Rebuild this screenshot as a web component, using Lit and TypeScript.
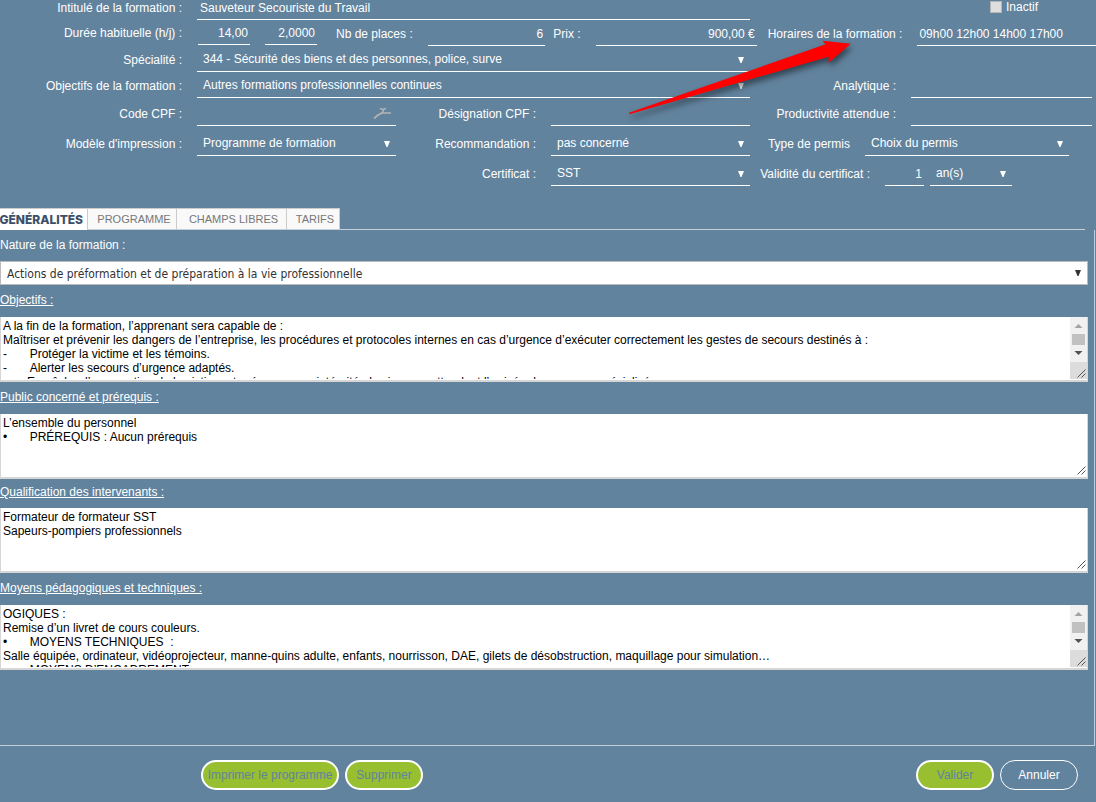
import { LitElement, html, svg, css } from "lit";
import { customElement } from "lit/decorators.js";

const caret = html`<svg class="caret" width="6" height="6" viewBox="0 0 6 6" aria-hidden="true">
  <path d="M0 0H6L3.500 6H2.500Z" fill="currentColor" />
</svg>`;

const hatch = svg`<path d="M0.5 8.5L8.5 0.5M4.5 8.5L8.5 4.5" stroke="#555" stroke-width="1" fill="none" />`;

interface Zone {
  id: string;
  label: string;
  text: string;
  scroll: boolean;
}

const ZONES: Zone[] = [
  {
    id: "objectifs",
    label: "Objectifs :",
    text:
      "A la fin de la formation, l’apprenant sera capable de :\n" +
      "Maîtriser et prévenir les dangers de l’entreprise, les procédures et protocoles internes en cas d’urgence d’exécuter correctement les gestes de secours destinés à :\n" +
      "-\tProtéger la victime et les témoins.\n" +
      "-\tAlerter les secours d’urgence adaptés.\n" +
      "-      Empêcher l’aggravation de la victime et préserver son intégrité physique en attendant l’arrivée des secours spécialisés.",
    scroll: true,
  },
  {
    id: "public",
    label: "Public concerné et prérequis :",
    text: "L’ensemble du personnel\n•\tPRÉREQUIS : Aucun prérequis",
    scroll: false,
  },
  {
    id: "qualification",
    label: "Qualification des intervenants :",
    text: "Formateur de formateur SST\nSapeurs-pompiers professionnels",
    scroll: false,
  },
  {
    id: "moyens",
    label: "Moyens pédagogiques et techniques :",
    text:
      "OGIQUES :\nRemise d’un livret de cours couleurs.\n•\tMOYENS TECHNIQUES  :\n" +
      "Salle équipée, ordinateur, vidéoprojecteur, manne-quins adulte, enfants, nourrisson, DAE, gilets de désobstruction, maquillage pour simulation…\n" +
      "•\tMOYENS D’ENCADREMENT",
    scroll: true,
  },
];

@customElement("app-root")
export class AppRoot extends LitElement {
  static styles = css`
    :host {
      display: block;
      position: relative;
      min-height: 100vh;
      overflow: hidden;
      background: #62839e;
      color: #fff;
      font: 12px/14px "Liberation Sans", Arial, sans-serif;
    }
    * {
      box-sizing: border-box;
    }
    form {
      display: flex;
      flex-direction: column;
      min-height: 100vh;
    }
    input,
    select,
    textarea,
    button {
      font: inherit;
      color: inherit;
      margin: 0;
      border-radius: 0;
    }
    .head {
      display: flex;
      flex-direction: column;
      padding-bottom: 22px;
    }
    .row {
      display: grid;
      grid-template-columns: minmax(0, 396fr) minmax(0, 354fr) minmax(0, 346fr);
      align-items: end;
      height: 26px;
    }
    .row.first {
      height: 20px;
    }
    .row.mid {
      height: 28px;
    }
    .row.tall {
      height: 30px;
    }
    .lead,
    .second,
    .third {
      display: flex;
      align-items: flex-end;
      min-width: 0;
    }
    .wide {
      grid-column: span 2;
    }
    label {
      white-space: nowrap;
      padding-bottom: 5px;
    }
    .lead > label {
      width: 182px;
      margin-right: 15px;
      text-align: right;
      flex: none;
    }
    .second > label {
      width: 140px;
      margin-right: 15px;
      text-align: right;
      flex: none;
    }
    .third > label {
      width: 146px;
      margin-right: 15px;
      text-align: right;
      flex: none;
    }
    .third > .permis {
      width: 100px;
    }
    .third > .validite {
      width: 120px;
    }
    .third {
      padding-right: 4px;
    }
    .third.short {
      padding-right: 27px;
    }
    .line {
      flex: 1 1 0;
      min-width: 0;
      width: 100%;
      height: 20px;
      padding: 0 2px 4px 3px;
      border: 0;
      border-bottom: 1px solid #fff;
      background: none;
      outline: none;
    }
    .num {
      text-align: right;
    }
    .pick {
      display: grid;
      flex: 1 1 0;
      min-width: 0;
      align-items: center;
    }
    .pick > select {
      grid-area: 1 / 1;
      appearance: none;
      width: 100%;
      height: 20px;
      padding: 0 20px 5px 6px;
      border: 0;
      border-bottom: 1px solid #fff;
      background: none;
      outline: none;
    }
    .pick > .caret {
      grid-area: 1 / 1;
      justify-self: end;
      margin-right: 6px;
      margin-bottom: 4px;
      pointer-events: none;
    }
    option {
      color: #333;
    }
    .search {
      display: grid;
      flex: 1 1 0;
      min-width: 0;
    }
    .search > * {
      grid-area: 1 / 1;
    }
    .search > button {
      justify-self: end;
      align-self: start;
      padding: 0;
      margin: 1px 5px 0 0;
      border: 0;
      background: none;
      height: 12px;
      line-height: 0;
    }
    .small {
      flex: none;
      width: 52px;
    }
    .timing {
      grid-column: 1 / -1;
      display: flex;
      align-items: flex-end;
      min-width: 0;
    }
    .timing > label {
      width: 182px;
      margin-right: 16px;
      text-align: right;
      flex: none;
      padding-bottom: 6px;
    }
    .timing > .small {
      margin-right: 15px;
      margin-bottom: 1px;
    }
    .timing > .after {
      width: auto;
      margin: 0 15px 0 8px;
      padding-bottom: 5px;
    }
    .timing > .after.far {
      margin-left: 4px;
    }
    .timing > .after.hours {
      margin-left: 11px;
    }
    .places {
      flex-grow: 116;
    }
    .prix {
      flex-grow: 161;
    }
    .horaires {
      flex-grow: 180;
      padding-left: 2px;
    }
    .inactive {
      align-items: center;
      gap: 4px;
      height: 20px;
      padding-left: 240px;
      padding-bottom: 6px;
    }
    .inactive > input {
      appearance: none;
      width: 12px;
      height: 12px;
      border: 1px solid #b6b6b6;
      background: #dedede;
    }
    .inactive > label {
      width: auto;
      margin: 0;
      padding: 0;
    }
    .count {
      flex: none;
      width: 39px;
      margin-right: 6px;
    }
    .unit {
      display: flex;
      width: 82px;
    }
    .tabs {
      display: flex;
      height: 22px;
      margin-right: 11px;
      border-bottom: 1px solid #c5d0da;
      font-size: 11px;
    }
    .tabs > button {
      height: 21px;
      padding: 0 0 0 4px;
      border: 1px solid #ccc;
      border-width: 1px 1px 0 0;
      background: #f9f9f9;
      color: #777;
      text-align: center;
      white-space: nowrap;
    }
    .tabs > .on {
      display: flex;
      align-items: center;
      justify-content: flex-end;
      height: 22px;
      width: 88px;
      padding: 1px 4px 0 0;
      background: #fff;
      color: #3b5068;
      font: 800 12px/14px Inter, sans-serif;
    }
    .t2 {
      width: 89px;
    }
    .t3 {
      width: 110px;
    }
    .t4 {
      width: 53px;
    }
    .panel {
      display: flex;
      flex-direction: column;
      flex: 1;
      margin-right: 1px;
      padding: 8px 6px 0 0;
      border: 1px solid #c5d0da;
      border-width: 0 1px 1px 0;
    }
    .panel > label {
      padding: 0;
    }
    .panel > .pick {
      flex: none;
      margin: 9px 0 8px;
      color: #333;
    }
    .panel > .pick > select {
      height: 24px;
      padding: 1px 20px 0 6px;
      border: 1px solid #bbb;
      background: #fff;
      font-family: "DejaVu Sans Condensed", "Open Sans", sans-serif;
    }
    .panel > .pick > .caret {
      margin: 0 7px 0 0;
    }
    .zone {
      display: flex;
      flex-direction: column;
      gap: 10px;
      margin-bottom: 8px;
    }
    .zone.qualification {
      gap: 9px;
      margin-top: -2px;
    }
    .zone > label {
      align-self: flex-start;
      padding: 0;
      text-decoration: underline;
    }
    .box {
      display: grid;
      grid-template-columns: 1fr auto;
      height: 65px;
      border: 1px solid #d6d6d6;
      border-width: 0 1px 2px 1px;
      background: #fff;
    }
    .box > textarea {
      grid-area: 1 / 1;
      width: 100%;
      height: 62px;
      padding: 2px 2px 0;
      border: 0;
      background: none;
      color: #000;
      resize: none;
      outline: none;
      overflow: hidden;
      white-space: pre-wrap;
    }
    .bar {
      grid-area: 1 / 2;
    }
    .grip {
      grid-area: 1 / 1;
      place-self: end;
      margin: 0 1px 2px 0;
      pointer-events: none;
    }
    .foot {
      display: flex;
      gap: 6px;
      height: 56px;
      padding: 14px 18px 0 201px;
    }
    .foot > button {
      height: 30px;
      min-width: 78px;
      padding: 0 4px;
      border: 2px solid #fff;
      border-radius: 15px;
      background: #97bf30;
      color: #62839e;
      white-space: nowrap;
    }
    .foot > .print {
      min-width: 138px;
    }
    .foot > .ok {
      margin-left: auto;
    }
    .foot > .cancel {
      border-width: 1px;
      background: none;
      color: #fff;
    }
    .pointer {
      position: absolute;
      left: 620px;
      top: 30px;
      pointer-events: none;
      filter: drop-shadow(2px 4px 3px rgba(0, 0, 0, 0.5));
    }
  `;

  private pick(id: string, value: string, name = "") {
    return html`<div class="pick">
      <select id=${id} aria-label=${name || value}>
        <option>${value}</option>
      </select>
      ${caret}
    </div>`;
  }

  private zone(z: Zone) {
    return html`<div class="zone ${z.id}">
      <label for=${z.id}>${z.label}</label>
      <div class="box">
        <textarea id=${z.id} .value=${z.text}></textarea>
        ${z.scroll
          ? html`<svg class="bar" width="17" height="62" viewBox="0 0 17 62" aria-hidden="true">
              <rect width="17" height="45" fill="#f1f1f1" />
              <path d="M4.5 11L8.5 7L12.5 11Z" fill="#a3a3a3" />
              <rect x="2" y="17" width="13" height="11" fill="#c1c1c1" />
              <path d="M4.5 34L8.5 38L12.5 34Z" fill="#505050" />
              <rect y="45" width="17" height="17" fill="#dcdcdc" />
              <g transform="translate(7 52)">${hatch}</g>
            </svg>`
          : html`<svg class="grip" width="9" height="9" viewBox="0 0 9 9" aria-hidden="true">${hatch}</svg>`}
      </div>
    </div>`;
  }

  render() {
    return html`
      <form @submit=${(e: Event) => e.preventDefault()}>
        <div class="head">
          <div class="row first">
            <div class="lead wide">
              <label for="intitule">Intitulé de la formation :</label>
              <input class="line" id="intitule" value="Sauveteur Secouriste du Travail" />
            </div>
            <div class="third inactive">
              <input type="checkbox" id="inactif" /><label for="inactif">Inactif</label>
            </div>
          </div>
          <div class="row">
            <div class="timing">
              <label for="heures">Durée habituelle (h/j) :</label>
              <input class="line num small" id="heures" value="14,00" />
              <input class="line num small" aria-label="Jours" value="2,0000" />
              <label class="after far" for="places">Nb de places :</label>
              <input class="line num places" id="places" value="6" />
              <label class="after" for="prix">Prix :</label>
              <input class="line num prix" id="prix" value="900,00 €" />
              <label class="after hours" for="horaires">Horaires de la formation :</label>
              <input class="line horaires" id="horaires" value="09h00 12h00 14h00 17h00" />
            </div>
          </div>
          <div class="row">
            <div class="lead wide">
              <label for="specialite">Spécialité :</label>
              ${this.pick("specialite", "344 - Sécurité des biens et des personnes, police, surve", "Spécialité")}
            </div>
          </div>
          <div class="row">
            <div class="lead wide">
              <label for="objectif">Objectifs de la formation :</label>
              ${this.pick("objectif", "Autres formations professionnelles continues", "Objectifs de la formation")}
            </div>
            <div class="third">
              <label for="analytique">Analytique :</label>
              <input class="line" id="analytique" />
            </div>
          </div>
          <div class="row mid">
            <div class="lead">
              <label for="cpf">Code CPF :</label>
              <div class="search">
                <input class="line" id="cpf" />
                <button type="button" aria-label="Rechercher un code CPF">
                  <svg width="18" height="12" viewBox="0 0 18 12" fill="none" stroke="#b4b4b4">
                    <path d="M1 11.500L5 8L9 6" stroke-width="1.700" />
                    <path d="M8 6H18" stroke-width="1.500" />
                    <path d="M7 1.500L10 2.500L13 1.500M10.500 2.500L9.500 6" stroke-width="1.500" />
                  </svg>
                </button>
              </div>
            </div>
            <div class="second">
              <label for="designation">Désignation CPF :</label>
              <input class="line" id="designation" />
            </div>
            <div class="third">
              <label for="productivite">Productivité attendue :</label>
              <input class="line" id="productivite" />
            </div>
          </div>
          <div class="row tall">
            <div class="lead">
              <label for="modele">Modèle d'impression :</label>
              ${this.pick("modele", "Programme de formation", "Modèle d'impression")}
            </div>
            <div class="second">
              <label for="recommandation">Recommandation :</label>
              ${this.pick("recommandation", "pas concerné", "Recommandation")}
            </div>
            <div class="third short">
              <label class="permis" for="permis">Type de permis</label>
              ${this.pick("permis", "Choix du permis", "Type de permis")}
            </div>
          </div>
          <div class="row tall">
            <div class="lead"></div>
            <div class="second">
              <label for="certificat">Certificat :</label>
              ${this.pick("certificat", "SST", "Certificat")}
            </div>
            <div class="third">
              <label class="validite" for="validite">Validité du certificat :</label>
              <input class="line num count" id="validite" value="1" />
              <div class="unit">${this.pick("unite", "an(s)", "Unité de validité")}</div>
            </div>
          </div>
        </div>
        <div class="tabs" role="tablist">
          <button type="button" class="on" role="tab" aria-selected="true">GÉNÉRALITÉS</button>
          <button type="button" class="t2" role="tab">PROGRAMME</button>
          <button type="button" class="t3" role="tab">CHAMPS LIBRES</button>
          <button type="button" class="t4" role="tab">TARIFS</button>
        </div>
        <div class="panel">
          <label for="nature">Nature de la formation :</label>
          ${this.pick("nature", "Actions de préformation et de préparation à la vie professionnelle", "Nature de la formation")}
          ${ZONES.map((z) => this.zone(z))}
        </div>
        <div class="foot">
          <button type="button" class="print">Imprimer le programme</button>
          <button type="button">Supprimer</button>
          <button type="submit" class="ok">Valider</button>
          <button type="button" class="cancel">Annuler</button>
        </div>
      </form>
      <svg class="pointer" width="240" height="90" viewBox="0 0 240 90" aria-hidden="true">
        <path d="M9 82.700L205.700 14.300L202.300 10.700L230.700 13.700L208.700 32.700V26.700L9.300 84.200Z" fill="#f00" />
      </svg>
    `;
  }
}
